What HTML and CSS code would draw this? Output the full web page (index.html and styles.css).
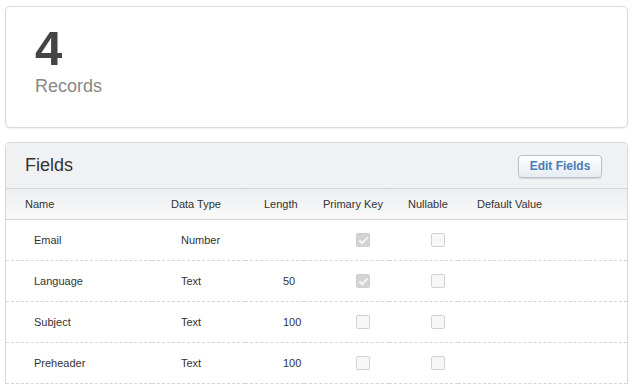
FILE: index.html
```html
<!DOCTYPE html>
<html lang="en">
<head>
  <meta charset="UTF-8">
  <title>Data Extension</title>
  <link rel="stylesheet" href="styles.css">
</head>
<body>
  <div class="card stat">
    <p class="count">4</p>
    <p class="label">Records</p>
  </div>

  <div class="card fields">
    <div class="fields-head">
      <h2>Fields</h2>
      <button type="button">Edit Fields</button>
    </div>
    <table>
      <colgroup>
        <col class="c-name"><col class="c-type"><col class="c-len"><col class="c-pk"><col class="c-null"><col>
      </colgroup>
      <thead>
        <tr>
          <th>Name</th>
          <th>Data Type</th>
          <th>Length</th>
          <th>Primary Key</th>
          <th>Nullable</th>
          <th>Default Value</th>
        </tr>
      </thead>
      <tbody>
        <tr>
          <td class="name">Email</td>
          <td class="type">Number</td>
          <td class="len"></td>
          <td class="pk"><span class="box checked"></span></td>
          <td class="null"><span class="box"></span></td>
          <td></td>
        </tr>
        <tr>
          <td class="name">Language</td>
          <td class="type">Text</td>
          <td class="len">50</td>
          <td class="pk"><span class="box checked"></span></td>
          <td class="null"><span class="box"></span></td>
          <td></td>
        </tr>
        <tr>
          <td class="name">Subject</td>
          <td class="type">Text</td>
          <td class="len">100</td>
          <td class="pk"><span class="box"></span></td>
          <td class="null"><span class="box"></span></td>
          <td></td>
        </tr>
        <tr>
          <td class="name">Preheader</td>
          <td class="type">Text</td>
          <td class="len">100</td>
          <td class="pk"><span class="box"></span></td>
          <td class="null"><span class="box"></span></td>
          <td></td>
        </tr>
      </tbody>
    </table>
  </div>
</body>
</html>
```

FILE: styles.css
```css
body {
  font-family: "Liberation Sans", Arial, sans-serif;
  margin: 0;
  padding: 6px 9px 0 5px;
  background-color: #ffffff;
  color: #333;
}
.card {
  border: 1px solid #d9d9d9;
  border-radius: 5px;
  background-color: #fff;
  box-shadow: 0 1px 2px rgba(0, 0, 0, 0.06);
}
.stat {
  height: 120px;
  padding: 0 29px;
  box-sizing: content-box;
  margin-bottom: 14px;
}
.count {
  margin: 0;
  padding-top: 16px;
  font-size: 49px;
  line-height: 50px;
  font-weight: bold;
  color: #444;
}
.label {
  margin: 3px 0 0 0;
  font-size: 18px;
  line-height: 20px;
  color: #888;
}
.fields {
  border-bottom: none;
  border-radius: 5px 5px 0 0;
}
.fields-head {
  display: flex;
  align-items: center;
  justify-content: space-between;
  height: 45px;
  padding: 0 25px 0 19px;
  background-color: #f0f1f3;
  border-bottom: 1px solid #d6d6d6;
  border-radius: 5px 5px 0 0;
}
.fields-head h2 {
  margin: 0;
  font-size: 18px;
  font-weight: normal;
  color: #333;
}
button {
  font-family: inherit;
  font-size: 12px;
  font-weight: bold;
  color: #4b7bb6;
  width: 84px;
  height: 23px;
  padding: 0;
  margin-top: 1px;
  border: 1px solid #b9c2cc;
  border-radius: 4px;
  background: linear-gradient(#ffffff, #e6ecf2);
  box-shadow: 0 1px 1px rgba(0, 0, 0, 0.12);
  cursor: pointer;
}
table {
  width: 100%;
  border-collapse: collapse;
  table-layout: fixed;
  font-size: 11px;
  color: #333;
}
.c-name { width: 146px; }
.c-type { width: 93px; }
.c-len { width: 59px; }
.c-pk { width: 85px; }
.c-null { width: 69px; }
th {
  height: 30px;
  padding: 0 0 0 19px;
  text-align: left;
  font-weight: normal;
  color: #333;
  background: linear-gradient(#eceef0, #fafafa);
  border-bottom: 1px solid #d6d6d6;
}
td {
  height: 40px;
  padding: 0;
  color: #333;
  border-bottom: 1px dashed #d6d6d6;
}
td.name { padding-left: 28px; }
td.type { padding-left: 29px; }
td.len { padding-left: 38px; }
td.pk { padding-left: 52px; }
td.null { padding-left: 42px; }
.box {
  display: block;
  width: 12px;
  height: 12px;
  border: 1px solid #d2d2d2;
  border-radius: 2px;
  background-color: #f7f7f7;
  position: relative;
}
.box.checked {
  background-color: #d3d3d3;
  border-color: #cfcfcf;
}
.box.checked::after {
  content: "";
  position: absolute;
  left: 4px;
  top: 1px;
  width: 3px;
  height: 7px;
  border: solid #f4f4f4;
  border-width: 0 2px 2px 0;
  transform: rotate(45deg);
}
```
